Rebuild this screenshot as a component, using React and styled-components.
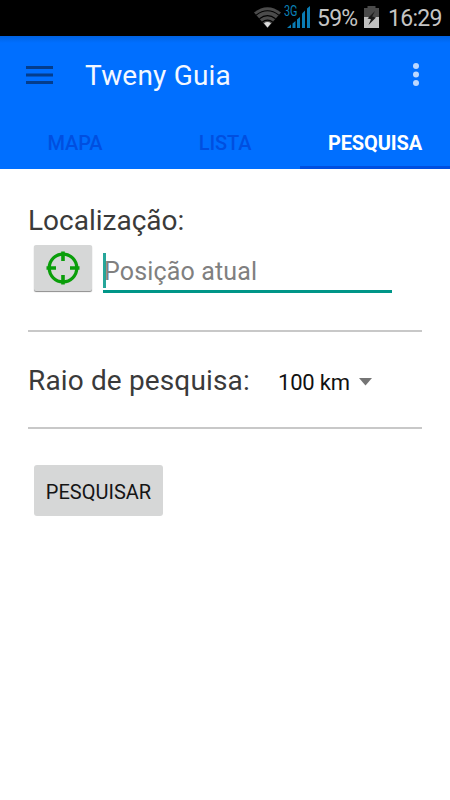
import React, {useState} from 'react';
import styled, { createGlobalStyle } from 'styled-components';

const primary = '#006fff';
const primaryDark = '#004fe0';
const accent = '#009688';
const lineColor = '#c8c8c8';

const GlobalStyle = createGlobalStyle`
  * { box-sizing: border-box; }
  body {
    margin: 0;
    background: #fff;
    font-family: Roboto, sans-serif;
  }
`;

const Screen = styled.div`
  width: 450px;
  height: 800px;
  background: #fff;
  overflow: hidden;
`;

const StatusBar = styled.div`
  height: 36px;
  padding: 1px 8px 0 0;
  display: flex;
  align-items: center;
  justify-content: flex-end;
  background: #000;
  color: #c4c4c4;
`;

const StatusText = styled.span`
  font-size: 23px;
  line-height: 36px;
  white-space: nowrap;
  width: ${props => props.$width}px;
  letter-spacing: ${props => props.$spacing || 0}px;
`;

const StatusIcon = styled.svg`
  display: block;
  flex: none;
  margin: 0 ${props => props.$gap}px ${props => props.$lift || 3}px 0;
`;

const Header = styled.header`
  height: 133px;
  background: linear-gradient(#0062e2, ${primary} 7px);
`;

const Toolbar = styled.div`
  height: 80px;
  padding: 0 28px 0 26px;
  display: flex;
  align-items: center;
`;

const Title = styled.h1`
  flex: 1;
  margin: 0 0 0 32px;
  font-size: 28px;
  font-weight: 400;
  line-height: 40px;
  letter-spacing: 0.2px;
  color: #f4f8ff;
`;

const IconButton = styled.button`
  display: block;
  padding: 0 0 2px;
  border: 0;
  background: none;
  svg { display: block; }
`;

const Tabs = styled.nav`
  height: 53px;
  display: grid;
  grid-template-columns: repeat(3, 1fr);
`;

const Tab = styled.button`
  padding: 4px 0 0;
  border: 0;
  border-bottom: 3px solid ${props => props.$active ? primaryDark : 'transparent'};
  background: none;
  font-family: inherit;
  font-size: 20px;
  font-weight: ${props => props.$active ? 700 : 500};
  color: ${props => props.$active ? '#fff' : primaryDark};
  letter-spacing: -0.1px;
`;

const Content = styled.main`
  padding: 32px 28px 0;
`;

const Label = styled.label`
  display: block;
  font-size: 28px;
  line-height: 40px;
  white-space: nowrap;
  color: #3a3a3a;
  letter-spacing: ${props => props.$spacing || 0}px;
`;

const LocationRow = styled.div`
  display: flex;
  padding: 4px 0 0 6px;
`;

const TargetButton = styled.button`
  width: 58px;
  height: 46px;
  padding: 0;
  border: 0;
  border-radius: 2px;
  display: flex;
  align-items: center;
  justify-content: center;
  background: #d6d7d7;
  box-shadow: 0 1px 1px #8c8c8c;
`;

const Field = styled.div`
  width: 289px;
  height: 48px;
  margin-left: 11px;
  padding-top: 8px;
  display: flex;
  align-items: flex-start;
  border-bottom: 3px solid ${accent};
`;

const Caret = styled.span`
  width: 3px;
  height: 35px;
  margin-right: -3px;
  background: #26a69a;
`;

const Input = styled.input`
  width: 100%;
  height: 37px;
  padding: 0 0 0 1px;
  border: 0;
  outline: 0;
  background: transparent;
  font-family: inherit;
  font-size: 25px;
  letter-spacing: 0.15px;
  &::placeholder { color: #808080; opacity: 1; }
`;

const Divider = styled.hr`
  height: 2px;
  margin: ${props => props.$top}px 0 0;
  border: 0;
  background: ${lineColor};
`;

const RadiusRow = styled.div`
  display: flex;
  align-items: center;
  margin-top: 29px;
`;

const Spinner = styled.button`
  display: flex;
  align-items: center;
  margin-left: auto;
  margin-right: 50px;
  padding: 3px 0 0;
  width: 94px;
  justify-content: space-between;
  border: 0;
  background: none;
  font-family: inherit;
  font-size: 22px;
  line-height: 34px;
  white-space: nowrap;
  letter-spacing: -0.2px;
  color: #111;
  svg { margin-bottom: 2px; }
`;

const SubmitButton = styled.button`
  display: block;
  width: 129px;
  height: 51px;
  margin: 36px 0 0 6px;
  padding: 2px 0 0;
  border: 0;
  border-radius: 3px;
  background: #d6d7d7;
  font-family: inherit;
  font-size: 20px;
  color: #151515;
`;

const WifiIcon = () => (
  <StatusIcon $gap={3} width="27" height="21" viewBox="0 0 27 21">
    <path d="M0 5.5Q13.5-5 27 5.5L13.5 21Z" fill="#4b4b4b" />
    <path d="M2.2 8.1Q13.5-.5 24.800 8.100M5.400 11.800Q13.500 5.500 21.600 11.800M8 15.200Q13.500 11 19 15.200" fill="none" stroke="#000" strokeWidth="1.1" />
    <path d="M10 16.300Q13.500 13.600 17 16.300L13.500 20.500Z" fill="#ddd" />
  </StatusIcon>
);

const SignalIcon = () => (
  <StatusIcon $gap={6} $lift={6} width="27" height="27" viewBox="0 -3 27 27">
    <text x="0" y="11" fontSize="14" fontFamily="Roboto" fill="#0a80b8" textLength="13.500" lengthAdjust="spacingAndGlyphs">3G</text>
    <g fill="#0a7cb4">
      <path d="M3 23L7 19.500V23Z" />
      <path d="M8.500 18.500L11.500 16V23H8.500Z" />
      <path d="M13 14.500L16 12V23H13Z" />
      <path d="M18 8.500L21 5.500V23H18Z" />
      <path d="M23 3.500L26 1V23H23Z" />
    </g>
  </StatusIcon>
);

const BatteryIcon = () => (
  <StatusIcon $gap={9} width="15" height="22" viewBox="0 0 15 22">
    <path d="M3.500 0H11.500V2H15V11H0V2H3.500Z" fill="#4a4a4a" />
    <path d="M0 11H15V22H0Z" fill="#c0c0c0" />
    <path d="M11 5L3.500 12.500L7 13.200L4.500 19L12 11.500L8.200 10.500Z" fill="#1a1a1a" />
  </StatusIcon>
);

const TargetIcon = () => (
  <svg width="34" height="34" viewBox="0 0 34 34" fill="none" stroke="#0a9e0a">
    <circle cx="17" cy="17" r="13.800" strokeWidth="3.200" />
    <path d="M17 .5V10M17 24V33.500M.5 17H10M24 17H33.500" strokeWidth="3.600" />
  </svg>
);

const tabs = ['MAPA', 'LISTA', 'PESQUISA'];

export default () => {
  const [current, setCurrent] = useState('PESQUISA');
  const [location, setLocation] = useState('');

  return (
    <Screen>
      <GlobalStyle />
      <StatusBar>
        <WifiIcon />
        <SignalIcon />
        <StatusText $width={47} $spacing={-0.8}>59%</StatusText>
        <BatteryIcon />
        <StatusText $width={54} $spacing={-0.7}>16:29</StatusText>
      </StatusBar>
      <Header>
        <Toolbar>
          <IconButton aria-label="Menu">
            <svg width="27" height="21" viewBox="0 0 27 21">
              <path d="M0 2.500H27M0 10H27M0 17.500H27" stroke="#043d8c" strokeWidth="3" />
            </svg>
          </IconButton>
          <Title>Tweny Guia</Title>
          <IconButton aria-label="Mais">
            <svg width="12" height="24" viewBox="0 0 12 24" fill="#bcd8ff">
              <circle cx="6" cy="3" r="3" />
              <circle cx="6" cy="11.500" r="3" />
              <circle cx="6" cy="20" r="3" />
            </svg>
          </IconButton>
        </Toolbar>
        <Tabs>
          {
            tabs.map(name => (
              <Tab key={name} $active={name === current} onClick={() => setCurrent(name)}>
                {name}
              </Tab>
            ))
          }
        </Tabs>
      </Header>
      <Content>
        <Label htmlFor="location">Localização:</Label>
        <LocationRow>
          <TargetButton><TargetIcon /></TargetButton>
          <Field>
            <Caret />
            <Input id="location" placeholder="Posição atual" value={location} onChange={e => setLocation(e.target.value)} />
          </Field>
        </LocationRow>
        <Divider $top={37} />
        <RadiusRow>
          <Label as="span" $spacing={0.14}>Raio de pesquisa:</Label>
          <Spinner>
            100 km
            <svg width="13" height="8" viewBox="0 0 13 8">
              <path d="M0 0H13L6.500 7.500Z" fill="#757575" />
            </svg>
          </Spinner>
        </RadiusRow>
        <Divider $top={26} />
        <SubmitButton>PESQUISAR</SubmitButton>
      </Content>
    </Screen>
  );
};
